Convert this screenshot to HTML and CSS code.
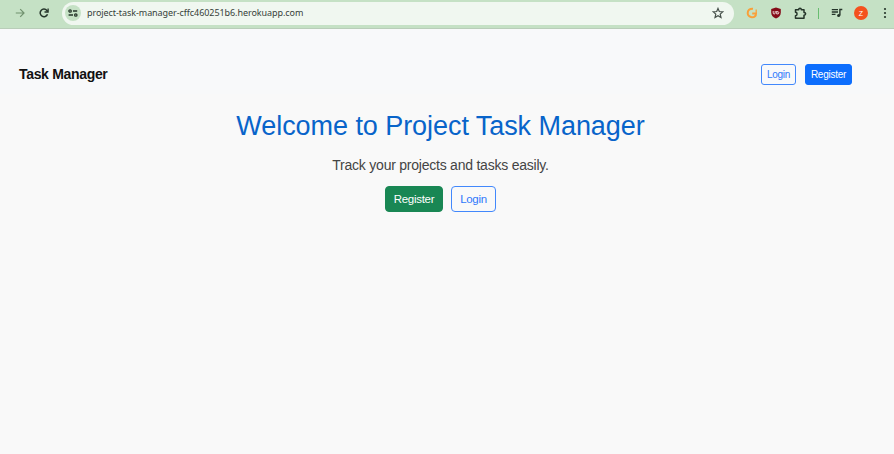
FILE: index.html
```html
<!DOCTYPE html>
<html lang="en">
<head>
<meta charset="utf-8">
<title>Project Task Manager</title>
<link rel="stylesheet" href="styles.css">
</head>
<body>
<div class="toolbar">
  <svg class="forward" width="10" height="10" viewBox="0 0 10 10" fill="none" stroke="#71916f" stroke-width="1.2"><path d="M.8 5H9M5.2 1.2 9 5 5.2 8.8"/></svg>
  <svg class="reload" width="10" height="10" viewBox="0 0 10 10" fill="none" stroke="#25352a" stroke-width="1.5"><path d="M8.5 6.2A3.8 3.8 0 1 1 7.9 2.5L8.7 3.5"/><path d="M9.1.4V4H5.5" stroke-width="1.3"/></svg>
  <div class="address">
    <span class="site-info"><svg width="10" height="8" viewBox="0 0 10 8" fill="none" stroke="#25352a" stroke-width="1.3"><path d="M5 2H9.2M.6 6H5"/><circle cx="2.1" cy="2" r="1.2"/><circle cx="7.8" cy="6" r="1.2"/></svg></span>
    <span class="url">project-task-manager-cffc460251b6.herokuapp.com</span>
    <svg class="star" width="12" height="12" viewBox="0 0 12 12" fill="none" stroke="#46504a" stroke-width="1.2"><path d="m6 1.4 1.3 3.1 3.5.3-2.6 2.3.8 3.4L6 8.7l-3 1.8.8-3.4L1.2 4.8l3.5-.3Z"/></svg>
  </div>
  <div class="tools">
    <svg width="12" height="12" viewBox="0 0 12 12" fill="none" stroke="#f9a03a" stroke-width="2"><path d="M7 1.700C3.500 1.500 1.700 3.500 1.700 6.200A4.100 4.100 0 0 0 6 10.200C8.500 10.200 10 8.500 10 6.400H6.200"/><path d="M10.200 2.600V6.500" stroke-width="1.300"/></svg>
    <svg width="12" height="12" viewBox="0 0 12 12"><path d="M6 .5 10.800 2v3.500C10.800 8.500 9 10.300 6 11.600 3 10.300 1.200 8.500 1.200 5.500V2Z" fill="#850b18"/><path d="M3.200 4v2q0 1 1 1t1-1V4M6.700 4v3q2.200.2 2.200-1.200T6.700 4.600" fill="none" stroke="#f5dfdf" stroke-width=".9"/></svg>
    <svg width="13" height="13" viewBox="0 0 13 13" fill="none" stroke="#25352a" stroke-width="1.500" stroke-linejoin="round"><path d="M1.500 2.700H4.700C4.700.8 7.300.8 7.300 2.700H10V5.500C12.200 5.500 12.200 8.200 10 8.200V11.300H1.500V8.700C3.600 8.700 3.600 5.300 1.500 5.300Z"/></svg>
    <span class="divider"></span>
    <svg width="12" height="12" viewBox="0 0 12 12" fill="none" stroke="#25352a" stroke-width="1.400"><path d="M.8 2.600H7M.8 5H7M.8 7.400H4.500M8.900 8.500V2.500H11.300"/><circle cx="7.600" cy="8.500" r="1.500" fill="#25352a" stroke="none"/></svg>
    <span class="avatar">Z</span>
    <svg width="4" height="12" viewBox="0 0 4 12" fill="#25352a"><circle cx="2" cy="2" r="1.100"/><circle cx="2" cy="6" r="1.100"/><circle cx="2" cy="10" r="1.100"/></svg>
  </div>
</div>
<nav class="navbar">
  <span class="brand">Task Manager</span>
  <div class="nav-actions"><a class="btn small outline">Login</a><a class="btn small primary">Register</a></div>
</nav>
<main class="hero">
  <h1>Welcome to Project Task Manager</h1>
  <p>Track your projects and tasks easily.</p>
  <div class="hero-actions"><a class="btn success">Register</a><a class="btn outline login">Login</a></div>
</main>
</body>
</html>
```
FILE: styles.css
```css
* { box-sizing: border-box; }
body { margin: 0; height: 454px; background: #f9f9f9; font-family: "Liberation Sans", Arial, sans-serif; overflow: hidden; }
svg { display: block; flex: none; }
.toolbar { display: flex; align-items: center; height: 29px; padding: 1px 7px 3px 15px; background: #c5e1c5; border-bottom: 1px solid #b9cdb9; }
.reload { margin-left: 14px; }
.address { display: flex; align-items: center; width: 672px; height: 23px; margin-left: 13px; padding: 0 10px 0 3px; border-radius: 12px; background: #f0f7f0; flex: none; }
.site-info { display: grid; place-items: center; width: 16px; height: 16px; border-radius: 50%; background: #c5e1c5; }
.url { margin-left: 6px; font: 9px/12px "Noto Sans", sans-serif; letter-spacing: -.07px; color: #36413a; white-space: nowrap; }
.star { margin-left: auto; }
.tools { display: flex; align-items: center; gap: 12px; padding-left: 12px; }
.divider { width: 1px; height: 11px; margin: 0 0 0 -1px; background: #68bd70; }
.avatar { display: grid; place-items: center; width: 14px; height: 14px; margin-right: 3px; margin-left: -1px; border-radius: 50%; background: #f4511e; color: #fff; font-size: 7px; }
.navbar { display: flex; align-items: center; justify-content: space-between; height: 65px; padding: 27px 42px 2px 19px; background: #f8f9fa; }
.brand { font-size: 14px; line-height: 16px; letter-spacing: -.32px; font-weight: bold; color: #111; }
.nav-actions, .hero-actions { display: flex; gap: 8px; }
.nav-actions { gap: 9px; padding-top: 1px; }
.btn { display: flex; align-items: center; justify-content: center; width: 58px; height: 26px; border: 1px solid; border-radius: 4px; font-size: 11.5px; letter-spacing: -.28px; }
.login { width: 45px; }
.small { width: 35px; height: 21px; border-radius: 3px; font-size: 10px; letter-spacing: -.25px; }
.primary { width: 47px; }
.outline { color: #2f78fb; border-color: #4288fc; }
.primary { color: #fff; background: #0d6efd; border-color: #0d6efd; }
.success { color: #fff; background: #198754; border-color: #198754; }
.hero { width: 881px; padding-top: 15px; display: flex; flex-direction: column; align-items: center; }
h1 { margin: 0; font-size: 27px; line-height: 34px; letter-spacing: -.06px; font-weight: normal; color: #0864ca; }
p { margin: 13px 0 12px; font-size: 14px; line-height: 18px; letter-spacing: -.23px; color: #444; }
```
